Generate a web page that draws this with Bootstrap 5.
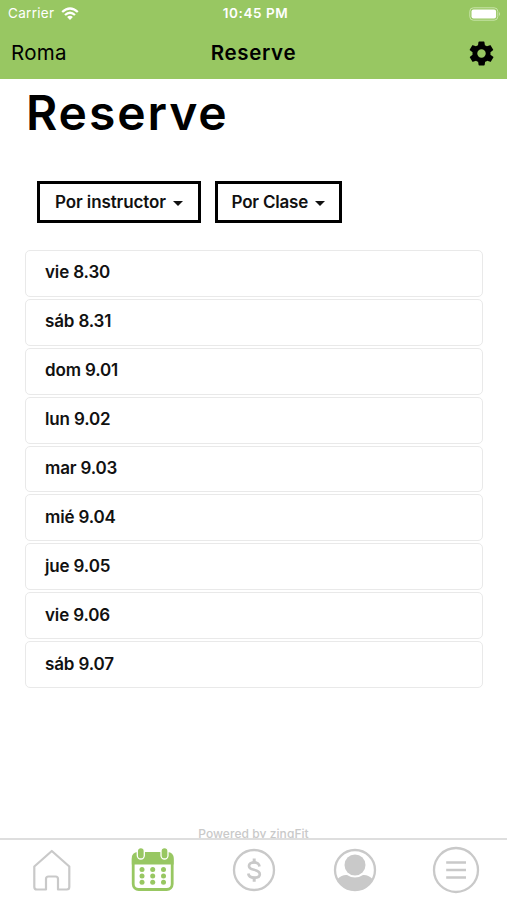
<!DOCTYPE html>
<html lang="es">
<head>
<meta charset="utf-8">
<meta name="viewport" content="width=device-width, initial-scale=1">
<title>Reserve</title>
<link href="https://cdn.jsdelivr.net/npm/bootstrap@5.3.0/dist/css/bootstrap.min.css" rel="stylesheet">
<style>
body{font-family:Inter,"Liberation Sans",sans-serif;color:#000;width:507px;height:900px;overflow:hidden;background:#fff}
svg{display:block;flex:none}
.app-head{background:#98c762;height:79px}
.status-bar{height:27px;color:#fff;font-size:13.5px;line-height:27px;padding:0 6px 0 8px}
.status-bar>*{flex:1 1 0}
.clock{font-weight:600;letter-spacing:.55px;padding-left:2px}
.carrier{letter-spacing:.3px}
.wifi{margin-left:7px}
.title-bar{height:52px;padding:0 11px;font-size:20.5px;line-height:52px}
.title-bar>*{flex:1 1 0}
.place{letter-spacing:.25px}
.bar-title{font-weight:600;letter-spacing:.65px}
.page-title{font-size:48px;font-weight:600;line-height:56px;letter-spacing:1.9px;margin:6px 0 0 26px}
.filters{margin:40px 0 0 37px;gap:14px}
.filter-btn{height:42px;border:3px solid #000;border-radius:0;padding:1px 0 0 15px;font-size:17px;font-weight:600;line-height:35px;color:#111;text-align:left;letter-spacing:-.1px;white-space:nowrap}
.filter-btn::after{vertical-align:2px;border-top-width:5px;border-left-width:5px;border-right-width:5px;margin-left:7px}
.f-inst{width:163.5px}.f-clase{width:127.5px;padding-left:14px;letter-spacing:-.2px}
.days{margin:27px 24px 0 25px;gap:2px}
.day{height:46.9px;border:1.5px solid #e9e9e9;border-radius:5px;padding:0 0 .5px 19px;font-size:17px;font-weight:600;color:#111;letter-spacing:-.15px}
.powered{margin-top:137px;height:13px;overflow:hidden;font-size:12px;line-height:17px;color:#c9c9c9;font-weight:500;letter-spacing:.06px}
.tabs{height:63px;border-top:2px solid #dedede;background:#fff;color:#c9c9c9}
.tabs .nav-link{padding:0;color:inherit;height:60px}
.tabs .active{color:#98c762}
</style>
<script src="https://cdn.jsdelivr.net/npm/bootstrap@5.3.0/dist/js/bootstrap.bundle.min.js" defer></script>
</head>
<body class="d-flex flex-column">
<header class="app-head flex-shrink-0">
  <div class="status-bar d-flex align-items-center">
    <div class="d-flex align-items-center"><span class="carrier">Carrier</span>
      <svg class="wifi" width="18" height="14" viewBox="0 0 18 14" fill="none" stroke="#fff" stroke-width="2.3"><path d="M1.2 5Q9-2 16.8 5M4 8Q9 3.5 14 8"/><path d="M9 13L6.1 10Q9 7.6 11.9 10Z" fill="#fff" stroke="none"/></svg></div>
    <div class="clock text-center">10:45 PM</div>
    <div class="d-flex justify-content-end"><svg width="32" height="14" viewBox="0 0 32 14"><rect x=".8" y=".8" width="28" height="12.4" rx="3.6" fill="none" stroke="#c9e4aa"/><rect x="2.5" y="2.5" width="24.6" height="9" rx="2" fill="#fff"/><path d="M30 5Q32 7 30 9Z" fill="#c9e4aa"/></svg></div>
  </div>
  <div class="title-bar d-flex align-items-center">
    <div class="place">Roma</div>
    <div class="bar-title text-center">Reserve</div>
    <div class="d-flex justify-content-end"><svg width="29" height="29" viewBox="0 0 24 24"><path d="M19.4 13a7.6 7.6 0 0 0 0-2l2.1-1.6a.5.5 0 0 0 .1-.7l-2-3.4a.5.5 0 0 0-.6-.2l-2.5 1a7 7 0 0 0-1.7-1l-.4-2.7A.5.5 0 0 0 14 2h-4a.5.5 0 0 0-.5.4l-.4 2.7a7 7 0 0 0-1.7 1l-2.5-1a.5.5 0 0 0-.6.2l-2 3.4a.5.5 0 0 0 .1.7L4.6 11a7.6 7.6 0 0 0 0 2l-2.1 1.6a.5.5 0 0 0-.1.7l2 3.4c.1.2.4.3.6.2l2.5-1a7 7 0 0 0 1.7 1l.4 2.7c0 .2.2.4.5.4h4c.2 0 .4-.2.5-.4l.4-2.7a7 7 0 0 0 1.7-1l2.5 1c.2.1.5 0 .6-.2l2-3.4a.5.5 0 0 0-.1-.7zM12 15.5a3.5 3.5 0 1 1 0-7 3.5 3.5 0 0 1 0 7z"/></svg></div>
  </div>
</header>
<main class="flex-shrink-0">
  <h1 class="page-title">Reserve</h1>
  <div class="filters d-flex">
    <button class="btn filter-btn f-inst dropdown-toggle" type="button">Por instructor</button>
    <button class="btn filter-btn f-clase dropdown-toggle" type="button">Por Clase</button>
  </div>
  <div class="days d-flex flex-column">
    <div class="day d-flex align-items-center">vie 8.30</div>
    <div class="day d-flex align-items-center">sáb 8.31</div>
    <div class="day d-flex align-items-center">dom 9.01</div>
    <div class="day d-flex align-items-center">lun 9.02</div>
    <div class="day d-flex align-items-center">mar 9.03</div>
    <div class="day d-flex align-items-center">mié 9.04</div>
    <div class="day d-flex align-items-center">jue 9.05</div>
    <div class="day d-flex align-items-center">vie 9.06</div>
    <div class="day d-flex align-items-center">sáb 9.07</div>
  </div>
</main>
<div class="powered text-center flex-shrink-0">Powered by zingFit</div>
<nav class="tabs nav nav-fill flex-nowrap flex-shrink-0">
  <a class="nav-link nav-item d-flex align-items-center justify-content-center" href="#" aria-label="Inicio"><svg width="48" height="48" viewBox="0 0 48 48" fill="none" stroke="currentColor" stroke-width="2.2" stroke-linejoin="round"><path d="M24.8 5L42.3 20.5V41Q42.3 43.5 39.8 43.5H31V33Q31 30.5 28.5 30.5H21.5Q19 30.5 19 33V43.5H9.8Q7.3 43.5 7.3 41V20.5Z"/></svg></a>
  <a class="nav-link nav-item active d-flex align-items-center justify-content-center" href="#" aria-label="Calendario"><svg width="48" height="48" viewBox="0 0 48 48"><rect x="5.2" y="8" width="39" height="35.5" rx="5.5" fill="#fff" stroke="currentColor" stroke-width="2.8"/><path d="M3.8 18.5V12.5Q3.8 6 10 6H39.5Q45.6 6 45.6 12.5V18.5Z" fill="currentColor"/><g fill="currentColor" stroke="#fff" stroke-width="1.3"><rect x="9.3" y="1.5" width="7" height="11.5" rx="3.5"/><rect x="33" y="1.5" width="7" height="11.5" rx="3.5"/></g><g fill="currentColor"><circle cx="14" cy="23.6" r="2.5"/><circle cx="24.7" cy="23.6" r="2.5"/><circle cx="35.5" cy="23.6" r="2.5"/><circle cx="14" cy="29.9" r="2.5"/><circle cx="24.7" cy="29.9" r="2.5"/><circle cx="35.5" cy="29.9" r="2.5"/><circle cx="14" cy="36.2" r="2.5"/><circle cx="24.7" cy="36.2" r="2.5"/><circle cx="35.5" cy="36.2" r="2.5"/></g></svg></a>
  <a class="nav-link nav-item d-flex align-items-center justify-content-center" href="#" aria-label="Comprar"><svg width="48" height="48" viewBox="0 0 48 48" fill="none" stroke="currentColor" stroke-width="2.3"><circle cx="24" cy="24" r="20"/><path stroke-width="2.7" d="M29.500 20.500Q29 16.500 24.200 16.500Q19 16.500 19 20Q19 22.800 24 23.800Q29.800 25 29.800 28.200Q29.800 31.700 24.200 31.700Q18.800 31.700 18.300 27.500"/><path fill="currentColor" stroke="none" d="M22.700 12.500H25.700V15L28 17.500H20.400L22.700 15ZM22.700 35.700H25.700V33.200L28 30.700H20.400L22.700 33.200Z"/></svg></a>
  <a class="nav-link nav-item d-flex align-items-center justify-content-center" href="#" aria-label="Perfil"><svg width="48" height="48" viewBox="0 0 48 48"><circle cx="24" cy="24" r="20" fill="none" stroke="currentColor" stroke-width="2.3"/><circle cx="24" cy="19" r="10.5" fill="currentColor"/><path d="M6.500 33Q11 28.500 16 29Q24 34 32 29Q37 28.500 41.500 33Q35.500 44.500 24 44.500Q12.500 44.500 6.500 33Z" fill="currentColor"/></svg></a>
  <a class="nav-link nav-item d-flex align-items-center justify-content-center" href="#" aria-label="Menú"><svg width="48" height="48" viewBox="0 0 48 48" fill="none" stroke="currentColor" stroke-width="2.3"><circle cx="24" cy="24" r="22"/><path d="M14.2 16.5H34M14.2 24H34M14.2 31.5H34"/></svg></a>
</nav>
</body>
</html>
